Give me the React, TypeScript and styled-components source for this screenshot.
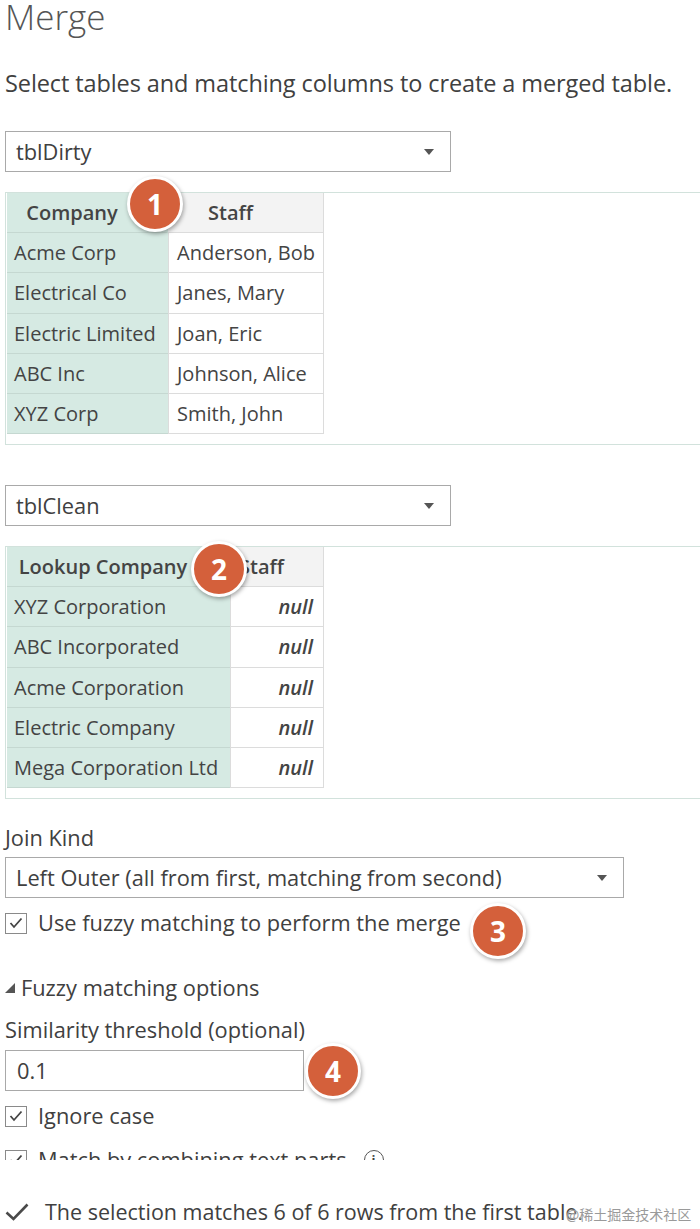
import React from "react";
import styled, { createGlobalStyle } from "styled-components";

// данные для двух превью таблиц
const dirtyRows = [
  ["Acme Corp", "Anderson, Bob"],
  ["Electrical Co", "Janes, Mary"],
  ["Electric Limited", "Joan, Eric"],
  ["ABC Inc", "Johnson, Alice"],
  ["XYZ Corp", "Smith, John"],
];

const cleanRows = [
  "XYZ Corporation",
  "ABC Incorporated",
  "Acme Corporation",
  "Electric Company",
  "Mega Corporation Ltd",
];

const GlobalStyle = createGlobalStyle`
  html, body {
    margin: 0;
    padding: 0;
    background: #ffffff;
  }
  body {
    font-family: "Open Sans", "Noto Sans", sans-serif;
    color: #404040;
  }
`;

const Caret = () => (
  <svg width="10" height="6" viewBox="0 0 10 6">
    <polygon points="0,0 10,0 5,6" fill="#555" />
  </svg>
);

const CheckBox = () => (
  <Box>
    <svg width="14" height="12" viewBox="0 0 14 12">
      <polyline points="1.5,6 5,10 12.5,1.5" fill="none" stroke="#444" strokeWidth="1.8" />
    </svg>
  </Box>
);

export default function App() {
  return (
    <Page>
      <GlobalStyle />
      <Scroller>
        <Title>Merge</Title>
        <Intro>Select tables and matching columns to create a merged table.</Intro>

        <Select $width={446}>
          <span>tblDirty</span>
          <Caret />
        </Select>
        <Preview>
          <Grid $cols="161px 156px">
            <HeadCell $key>Company</HeadCell>
            <HeadCell>Staff</HeadCell>
            {dirtyRows.map(([c, s]) => (
              <React.Fragment key={c}>
                <KeyCell>{c}</KeyCell>
                <Cell>{s}</Cell>
              </React.Fragment>
            ))}
          </Grid>
          <Badge $left={121} $top={-17}>1</Badge>
        </Preview>

        <Select $width={446} $gap={40}>
          <span>tblClean</span>
          <Caret />
        </Select>
        <Preview>
          <Grid $cols="223px 94px">
            <HeadCell $key>Lookup Company</HeadCell>
            <HeadCell>Staff</HeadCell>
            {cleanRows.map((c) => (
              <React.Fragment key={c}>
                <KeyCell>{c}</KeyCell>
                <NullCell>null</NullCell>
              </React.Fragment>
            ))}
          </Grid>
          <Badge $left={185} $top={-6}>2</Badge>
        </Preview>

        <Label>Join Kind</Label>
        <Select $width={619} $gap={6}>
          <span>Left Outer (all from first, matching from second)</span>
          <Caret />
        </Select>
        <CheckRow>
          <CheckBox />
          <span>Use fuzzy matching to perform the merge</span>
          <Badge $left={465} $top={-7}>3</Badge>
        </CheckRow>

        <Section>
          <svg width="10" height="10" viewBox="0 0 10 10">
            <polygon points="10,0 10,10 0,10" fill="#555" />
          </svg>
          <span>Fuzzy matching options</span>
        </Section>
        <Label $gap={16}>Similarity threshold (optional)</Label>
        <InputRow>
          <Input>0.1</Input>
          <Badge $left={300} $top={-7}>4</Badge>
        </InputRow>
        <CheckRow $gap={12}>
          <CheckBox />
          <span>Ignore case</span>
        </CheckRow>
        <CheckRow $gap={18}>
          <CheckBox />
          <span>Match by combining text parts</span>
          <Info>i</Info>
        </CheckRow>
      </Scroller>

      <Footer>
        <svg width="24" height="18" viewBox="0 0 24 18">
          <polyline points="1.5,9.5 8.5,16 22.5,1.5" fill="none" stroke="#4a4a4a" strokeWidth="2.6" />
        </svg>
        <span>The selection matches 6 of 6 rows from the first table.</span>
        <Watermark>@稀土掘金技术社区</Watermark>
      </Footer>
    </Page>
  );
}

// Стили
const Page = styled.div`
  width: 700px;
  height: 1229px;
  position: relative;
  overflow: hidden;
`;

const Scroller = styled.div`
  height: 1160px;
  overflow: hidden;
  padding-left: 5px;
`;

const Title = styled.h1`
  margin: 0;
  font-size: 35px;
  font-weight: 300;
  line-height: 34px;
  color: #555;
`;

const Intro = styled.p`
  margin: 35px 0 0;
  font-size: 23.5px;
  line-height: 28px;
  letter-spacing: -0.1px;
  white-space: nowrap;
`;

const Select = styled.div<{ $width: number; $gap?: number }>`
  box-sizing: border-box;
  width: ${(p) => p.$width}px;
  height: 41px;
  margin-top: ${(p) => p.$gap ?? 34}px;
  border: 1px solid #a9a9a9;
  display: flex;
  align-items: center;
  justify-content: space-between;
  padding: 0 16px 0 10px;
  font-size: 21.8px;
  background: #fff;
  white-space: nowrap;
`;

const Preview = styled.div`
  position: relative;
  margin-top: 20px;
  height: 253px;
  box-sizing: border-box;
  border-top: 1px solid #d2e2dc;
  border-bottom: 1px solid #d2e2dc;
  border-left: 1px solid #d2e2dc;
  padding-left: 1px;
`;

const Grid = styled.div<{ $cols: string }>`
  display: grid;
  grid-template-columns: ${(p) => p.$cols};
  grid-auto-rows: 40.2px;
  width: max-content;
  font-size: 20px;
  color: #444;
`;

const HeadCell = styled.div<{ $key?: boolean }>`
  display: flex;
  align-items: center;
  justify-content: center;
  padding-right: 30px;
  font-weight: 600;
  background: ${(p) => (p.$key ? "#d6eae3" : "#f3f3f3")};
  border-bottom: 1px solid ${(p) => (p.$key ? "#c5d8d1" : "#dcdcdc")};
  border-right: 1px solid ${(p) => (p.$key ? "#d6eae3" : "#dcdcdc")};
  white-space: nowrap;
`;

const KeyCell = styled.div`
  display: flex;
  align-items: center;
  padding-left: 7px;
  background: #d6eae3;
  border-bottom: 1px solid #c5d8d1;
  white-space: nowrap;
`;

const Cell = styled.div`
  display: flex;
  align-items: center;
  padding-left: 8px;
  background: #fff;
  border: 1px solid #dcdcdc;
  border-top: none;
  white-space: nowrap;
`;

const NullCell = styled(Cell)`
  justify-content: flex-end;
  padding-right: 10px;
  font-style: italic;
  font-weight: 600;
`;

const Badge = styled.div<{ $left: number; $top: number }>`
  position: absolute;
  left: ${(p) => p.$left}px;
  top: ${(p) => p.$top}px;
  width: 50px;
  height: 50px;
  border-radius: 50%;
  border: 3px solid #fff;
  background: #d4603b;
  box-shadow: 1px 2px 4px rgba(0, 0, 0, 0.35);
  color: #fff;
  font-size: 28px;
  font-weight: 700;
  display: flex;
  align-items: center;
  justify-content: center;
`;

const Label = styled.div<{ $gap?: number }>`
  margin-top: ${(p) => p.$gap ?? 26}px;
  font-size: 21.8px;
  line-height: 26px;
  white-space: nowrap;
`;

const CheckRow = styled.div<{ $gap?: number }>`
  position: relative;
  display: flex;
  align-items: center;
  gap: 11px;
  margin-top: ${(p) => p.$gap ?? 12}px;
  font-size: 21.8px;
  line-height: 26px;
  white-space: nowrap;
`;

const Box = styled.div`
  box-sizing: border-box;
  width: 22px;
  height: 21px;
  border: 1px solid #8a8a8a;
  display: flex;
  align-items: center;
  justify-content: center;
  flex-shrink: 0;
`;

const Section = styled.div`
  display: flex;
  align-items: center;
  gap: 6px;
  margin-top: 39px;
  font-size: 21.8px;
  line-height: 26px;
`;

const InputRow = styled.div`
  position: relative;
  margin-top: 7px;
`;

const Input = styled.div`
  box-sizing: border-box;
  width: 299px;
  height: 41px;
  border: 1px solid #a9a9a9;
  display: flex;
  align-items: center;
  padding-left: 11px;
  font-size: 21.8px;
`;

const Info = styled.div`
  box-sizing: border-box;
  width: 20px;
  height: 20px;
  border-radius: 50%;
  border: 1.5px solid #555;
  font-size: 13px;
  font-weight: 700;
  display: flex;
  align-items: center;
  justify-content: center;
  margin-left: 6px;
`;

const Footer = styled.div`
  position: relative;
  display: flex;
  align-items: center;
  gap: 16px;
  margin-top: 38px;
  padding-left: 5px;
  font-size: 21.5px;
  line-height: 28px;
  white-space: nowrap;
`;

const Watermark = styled.span`
  position: absolute;
  left: 566px;
  top: 2px;
  font-family: "Noto Sans CJK SC", sans-serif;
  font-size: 14px;
  color: #9a9a9a;
  text-shadow: 0 0 2px #fff;
`;
